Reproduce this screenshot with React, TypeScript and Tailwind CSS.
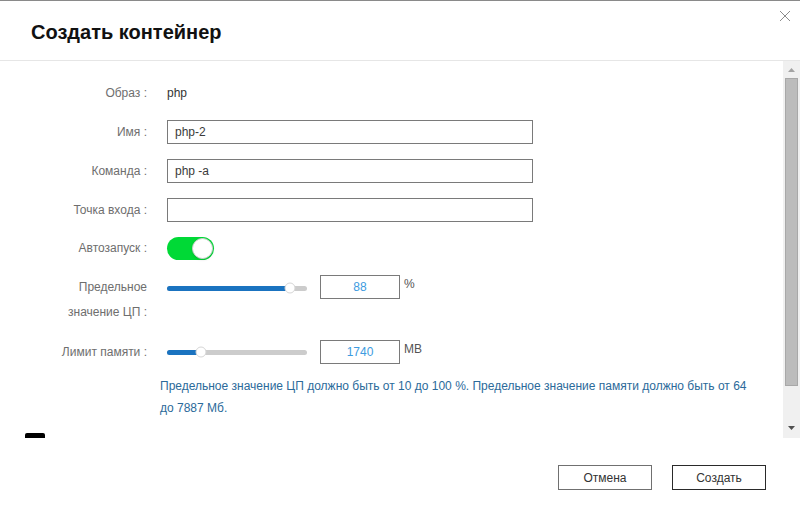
import React, { useState } from "react";

const Label: React.FC<{ children: React.ReactNode }> = ({ children }) => (
    <div className="w-[147px] shrink-0 text-right text-[12px] text-[#6e6e6e] leading-[24px]">
        {children}
    </div>
);

const Slider: React.FC<{ pct: number }> = ({ pct }) => (
    <div className="relative w-[140px] h-[5px] rounded-full bg-[#cccccc]">
        <div className="absolute left-0 top-0 h-[5px] rounded-full bg-[#1a73c0]" style={{ width: `${pct}%` }} />
        <div
            className="absolute top-1/2 w-[11px] h-[11px] -translate-x-1/2 -translate-y-1/2 rounded-full bg-white border border-[#d6d6d6]"
            style={{ left: `${pct}%` }}
        />
    </div>
);

const App: React.FC = () => {
    const [auto, setAuto] = useState(true);

    return (
        <div
            className="relative w-[800px] h-[522px] bg-white border-t border-[#8a8a8a] flex flex-col overflow-hidden"
            style={{ fontFamily: '"Liberation Sans", Arial, sans-serif' }}
        >
            {/* Header */}
            <div className="h-[60px] shrink-0 flex items-center pl-[31px] border-b border-[#e6e6e6]">
                <h2 className="text-[20px] font-bold text-[#111] pt-[2px]">Создать контейнер</h2>
            </div>
            <button className="absolute top-[9px] right-[9px] w-[12px] h-[12px]">
                <svg viewBox="0 0 12 12" className="w-[12px] h-[12px]">
                    <path d="M1 1 L11 11 M11 1 L1 11" stroke="#8c8c8c" strokeWidth="1" />
                </svg>
            </button>

            {/* Body */}
            <div className="h-[377px] shrink-0 flex overflow-hidden">
                <div className="relative flex-1 flex flex-col pt-[20px] text-[12px]">
                    <div className="flex items-center gap-[20px]">
                        <Label>Образ :</Label>
                        <span className="text-[#333]">php</span>
                    </div>
                    <div className="flex items-center gap-[20px] mt-[15px]">
                        <Label>Имя :</Label>
                        <div className="w-[366px] h-[24px] border border-[#7a7a7a] px-[7px] flex items-center text-[#3a3a3a]">php-2</div>
                    </div>
                    <div className="flex items-center gap-[20px] mt-[15px]">
                        <Label>Команда :</Label>
                        <div className="w-[366px] h-[24px] border border-[#7a7a7a] px-[7px] flex items-center text-[#3a3a3a]">php -a</div>
                    </div>
                    <div className="flex items-center gap-[20px] mt-[15px]">
                        <Label>Точка входа :</Label>
                        <div className="w-[366px] h-[24px] border border-[#7a7a7a]" />
                    </div>
                    <div className="flex items-center gap-[20px] mt-[14px]">
                        <Label>Автозапуск :</Label>
                        <button
                            onClick={() => setAuto(!auto)}
                            className={`relative w-[47px] h-[23px] rounded-full ${auto ? "bg-[#00d936]" : "bg-[#ccc]"}`}
                        >
                            <span
                                className={`absolute top-[1px] w-[21px] h-[21px] rounded-full bg-white border border-[#d0d0d0] shadow-sm ${auto ? "right-[1px]" : "left-[1px]"}`}
                            />
                        </button>
                    </div>
                    <div className="flex items-start gap-[20px] mt-[15px]">
                        <div className="w-[147px] shrink-0 text-right text-[12px] text-[#6e6e6e] leading-[25px]">
                            Предельное
                            <br />
                            значение ЦП :
                        </div>
                        <div className="flex items-start">
                            <div className="h-[25px] flex items-center pt-[1px]">
                                <Slider pct={88} />
                            </div>
                            <div className="ml-[13px] w-[80px] h-[24px] border border-[#7a7a7a] flex items-center justify-center text-[#3d9be0]">88</div>
                            <span className="ml-[4px] text-[#555] leading-[18px]">%</span>
                        </div>
                    </div>
                    <div className="flex items-center gap-[20px] mt-[15px]">
                        <Label>Лимит памяти :</Label>
                        <div className="flex items-start">
                            <div className="h-[24px] flex items-center">
                                <Slider pct={24} />
                            </div>
                            <div className="ml-[13px] w-[80px] h-[24px] border border-[#7a7a7a] flex items-center justify-center text-[#3d9be0]">1740</div>
                            <span className="ml-[4px] text-[#555] leading-[18px]">MB</span>
                        </div>
                    </div>
                    <p className="mt-[11px] ml-[160px] w-[596px] text-[12px] leading-[22px] text-[#2b6a9a]">
                        Предельное значение ЦП должно быть от 10 до 100 %. Предельное значение памяти должно быть от 64
                        до 7887 Мб.
                    </p>
                    <div className="mt-[14px] ml-[25px] w-[20px] h-[12px] bg-black rounded-t-[2px]" />
                </div>

                {/* Scrollbar */}
                <div className="w-[17px] shrink-0 bg-[#f0f0f0] flex flex-col items-center">
                    <div className="h-[17px] flex items-center justify-center">
                        <svg viewBox="0 0 7 4" className="w-[7px] h-[4px]">
                            <path d="M0 4 L3.5 0 L7 4 Z" fill="#a3a3a3" />
                        </svg>
                    </div>
                    <div className="w-[13px] h-[308px] bg-[#bcbcbc] border border-[#a8a8a8]" />
                    <div className="flex-1" />
                    <div className="h-[17px] flex items-center justify-center mb-[2px]">
                        <svg viewBox="0 0 7 4" className="w-[7px] h-[4px]">
                            <path d="M0 0 L7 0 L3.5 4 Z" fill="#505050" />
                        </svg>
                    </div>
                </div>
            </div>

            {/* Footer */}
            <div className="flex-1 flex justify-end items-start gap-[20px] pr-[34px] pt-[27px]">
                <button className="w-[94px] h-[25px] border border-[#707070] text-[12px] text-[#333]">Отмена</button>
                <button className="w-[94px] h-[25px] border border-[#2a2a2a] text-[12px] text-[#333]">Создать</button>
            </div>
        </div>
    );
};

export default App;
